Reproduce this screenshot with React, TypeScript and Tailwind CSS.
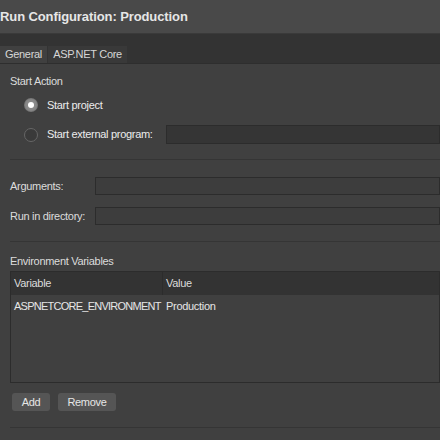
import React from "react";

function Radio({ checked }: { checked: boolean }) {
  return checked ? (
    <div className="w-[14px] h-[14px] rounded-full bg-[#8a8a8a] flex items-center justify-center shadow-[inset_0_0_2px_rgba(0,0,0,0.4)]">
      <div className="w-[6px] h-[6px] rounded-full bg-white" />
    </div>
  ) : (
    <div className="w-[14px] h-[14px] rounded-full border border-[#666] bg-[#3a3a3a]" />
  );
}

export default function App() {
  return (
    <div
      className="w-[440px] h-[440px] overflow-hidden bg-[#404040] text-[#dcdcdc] text-[11px] tracking-[-0.3px] whitespace-nowrap"
      style={{ fontFamily: '"Liberation Sans", Arial, sans-serif' }}
    >
      <div className="h-[34px] bg-[#494949] flex items-center border-b border-[#3a3a3a]">
        <span className="text-[13px] font-bold text-[#e6e6e6] tracking-[-0.1px]">Run Configuration: Production</span>
      </div>
      <div className="h-[30px] bg-[#333333] flex items-end border-b border-[#2e2e2e]">
        <div className="h-[17px] w-[47px] bg-[#404040] flex items-center justify-center text-[#d6d6d6]">General</div>
        <div className="h-[17px] w-[79px] ml-[1px] bg-[#393939] flex items-center justify-center text-[#d6d6d6]">ASP.NET Core</div>
      </div>
      <div className="pl-[10px]">
        <div className="pt-[11px] h-[29px] leading-[13px]">Start Action</div>
        <div className="flex items-center h-[22px] pl-[14px] gap-[9px] mt-[1px]">
          <Radio checked />
          <span className="text-[#ececec]">Start project</span>
        </div>
        <div className="flex items-center h-[19px] mt-[9px] pl-[14px] gap-[9px]">
          <Radio checked={false} />
          <span className="text-[#ececec] w-[110px]">Start external program:</span>
          <div className="flex-1 h-[19px] bg-[#353535] border border-[#2c2c2c]" />
        </div>
        <div className="h-px bg-[#353535] mt-[15px]" />
        <div className="flex items-center h-[18px] mt-[17px]">
          <span className="w-[85px]">Arguments:</span>
          <div className="flex-1 h-[18px] bg-[#3d3d3d] border border-[#2c2c2c]" />
        </div>
        <div className="flex items-center h-[18px] mt-[12px]">
          <span className="w-[85px]">Run in directory:</span>
          <div className="flex-1 h-[18px] bg-[#3d3d3d] border border-[#2c2c2c]" />
        </div>
        <div className="h-px bg-[#353535] mt-[16px]" />
        <div className="mt-[13px] h-[16px] leading-[13px]">Environment Variables</div>
        <div className="h-[112px] border border-[#2c2c2c] flex flex-col">
          <div className="h-[23px] bg-[#333333] flex items-center">
            <div className="w-[152px] pl-[3px] h-full flex items-center border-r border-[#2c2c2c]">Variable</div>
            <div className="pl-[3px]">Value</div>
          </div>
          <div className="h-[22px] flex items-center text-[#e6e6e6]">
            <div className="w-[152px] pl-[3px] tracking-[-0.75px]">ASPNETCORE_ENVIRONMENT</div>
            <div className="pl-[3px]">Production</div>
          </div>
        </div>
        <div className="flex gap-[8px] mt-[10px] pl-[2px]">
          <div className="h-[18px] w-[38px] rounded-[3px] bg-[#555555] flex items-center justify-center text-[#e6e6e6]">Add</div>
          <div className="h-[18px] w-[58px] rounded-[3px] bg-[#555555] flex items-center justify-center text-[#e6e6e6]">Remove</div>
        </div>
        <div className="h-px bg-[#353535] mt-[16px]" />
      </div>
    </div>
  );
}
